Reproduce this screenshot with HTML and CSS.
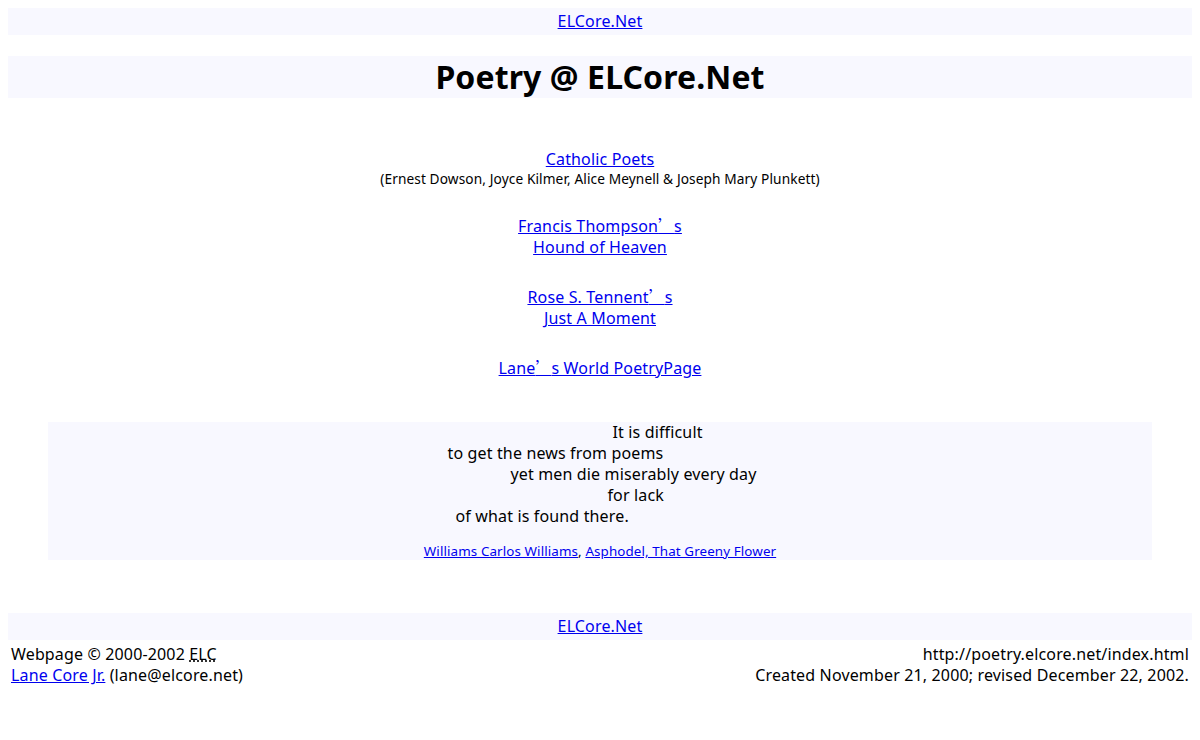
FILE: index.html
```html
<!DOCTYPE html>
<html>
<head>
<meta charset="utf-8">
<title>Poetry @ ELCore.Net</title>
<link rel="stylesheet" href="styles.css">
</head>
<body>
<div class="bar"><a href="#">ELCore.Net</a></div>
<h1 class="title">Poetry @ ELCore.Net</h1>

<div class="links">
  <div class="entry"><a href="#">Catholic Poets</a><span class="sub">(Ernest Dowson, Joyce Kilmer, Alice Meynell &amp; Joseph Mary Plunkett)</span></div>
  <div class="entry"><a href="#">Francis Thompson<span class="cjk">’</span>s<br>Hound of Heaven</a></div>
  <div class="entry"><a href="#">Rose S. Tennent<span class="cjk">’</span>s<br>Just A Moment</a></div>
  <div class="entry"><a href="#">Lane<span class="cjk">’</span>s World PoetryPage</a></div>
</div>

<div class="quote">
  <div class="poem">
    <div class="line i1">It is difficult</div>
    <div class="line">to get the news from poems</div>
    <div class="line i2">yet men die miserably every day</div>
    <div class="line i3">for lack</div>
    <div class="line i4">of what is found there.</div>
  </div>
  <div class="cite"><a href="#">Williams Carlos Williams</a>, <a href="#">Asphodel, That Greeny Flower</a></div>
</div>

<div class="bar foot"><a href="#">ELCore.Net</a></div>
<div class="footer">
  <div class="fl">Webpage © 2000-2002 <abbr title="ELCore">ELC</abbr><br><a href="#">Lane Core Jr.</a> (lane@elcore.net)</div>
  <div class="fr">http://poetry.elcore.net/index.html<br>Created November 21, 2000; revised December 22, 2002.</div>
</div>
</body>
</html>
```
FILE: styles.css
```css
html, body { background: #ffffff; }
body {
  margin: 8px;
  font-family: "Noto Sans", "Open Sans", sans-serif;
  font-size: 16px;
  line-height: 21px;
  letter-spacing: 0.15px;
  color: #000;
}
a { color: #0000ee; text-decoration: underline; }
.cjk { font-family: "Noto Sans CJK SC", sans-serif; letter-spacing: 0; }
.bar {
  background: #f8f8ff;
  text-align: center;
  padding: 3px 0;
}
.title {
  background: #f8f8ff;
  text-align: center;
  font-size: 32px;
  line-height: 42px;
  font-weight: bold;
  letter-spacing: 0.1px;
  margin: 21px 0 0 0;
}
.links { text-align: center; padding-top: 51px; }
.entry { margin: 0 0 28px 0; }
.sub { display: block; font-size: 13.7px; line-height: 17px; letter-spacing: 0.1px; }
.quote {
  background: #f8f8ff;
  margin: 43px 40px 0 40px;
  text-align: center;
}
.poem {
  display: inline-block;
  text-align: left;
  padding-left: 4px;
}
.line { white-space: nowrap; }
.i1 { padding-left: 165px; }
.i2 { padding-left: 63px; }
.i3 { padding-left: 160px; }
.i4 { padding-left: 8px; }
.cite { font-size: 13.4px; line-height: 17px; letter-spacing: 0.1px; margin-top: 16px; }
.foot { margin-top: 53px; }
.footer {
  display: flex;
  justify-content: space-between;
  padding: 4px 3px 3px 3px;
}
.fr { text-align: right; }
abbr { text-decoration: underline dotted; }
```
